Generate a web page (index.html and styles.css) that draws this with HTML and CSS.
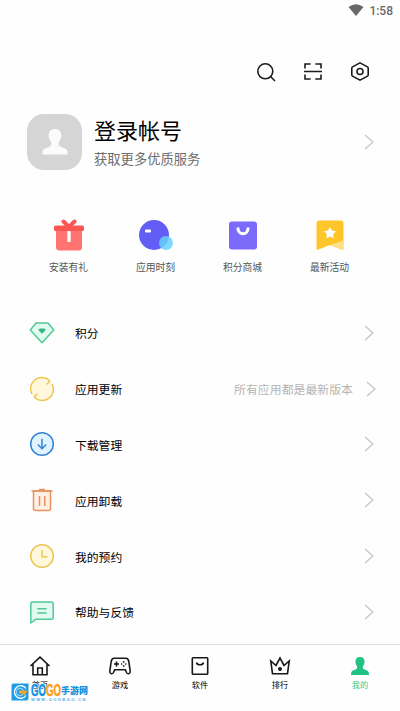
FILE: index.html
```html
<!DOCTYPE html>
<html lang="zh-CN">
<head>
  <meta charset="UTF-8" />
  <meta name="viewport" content="width=device-width, initial-scale=1.0" />
  <title>我的</title>
  <link rel="stylesheet" href="styles.css">
</head>
<body>

  <div class="status-bar">
    <svg width="16" height="12" viewBox="0 0 16 12"><path d="M0.5 3Q8-2.4 15.500 3L8 12Z" fill="#686868"/></svg>
    <span>1:58</span>
  </div>

  <div class="toolbar">
    <svg width="20" height="20" viewBox="0 0 20 20"><circle cx="9.300" cy="9.300" r="7.500"/><path d="M14.500 14.500L19 19"/></svg>
    <svg width="20" height="20" viewBox="0 0 20 20"><path d="M2 6.500V2H7.700M12.300 2H18V6.500M2 12.500V17H7.700M12.300 17H18V12.500M1 9.500H19"/></svg>
    <svg width="20" height="20" viewBox="0 0 20 20"><path d="M10 .9L17.500 4.900Q18.200 5.300 18.200 6.200V12.800Q18.200 13.700 17.500 14.100L10 18.100L2.500 14.100Q1.800 13.700 1.800 12.800V6.200Q1.800 5.300 2.500 4.900Z"/><circle cx="10" cy="9.500" r="3"/></svg>
  </div>

  <div class="profile">
    <div class="avatar">
      <svg width="26" height="26" viewBox="0 0 26 26"><path d="M13 0C17 0 19.300 2.700 19.300 6.500C19.300 10 17.300 12 16.800 13.500C16.300 15.500 17 17 19 18L23.500 19.800C25.300 20.600 25.600 22 25.600 25.500H.4C.4 22 .7 20.600 2.500 19.800L7 18C9 17 9.700 15.500 9.200 13.500C8.700 12 6.700 10 6.700 6.500C6.700 2.700 9 0 13 0Z" fill="#fbfbfb"/></svg>
    </div>
    <div class="profile-text">
      <h1>登录帐号</h1>
      <p>获取更多优质服务</p>
    </div>
    <svg class="chevron" width="10" height="16" viewBox="0 0 10 16"><path d="M1 1L9 8L1 15"/></svg>
  </div>

  <div class="shortcuts">
    <div class="shortcut">
      <svg width="36" height="34" viewBox="0 0 36 34">
        <path d="M5 8H31V28Q31 31.500 27.500 31.500H8.500Q5 31.500 5 28Z" fill="#ff7470"/>
        <path d="M12.500 2.500L18 8L23.500 2.500" stroke="#fb5752" stroke-width="4" stroke-linecap="round" fill="none"/>
        <rect x="3" y="6.500" width="30" height="5.500" rx="1.500" fill="#fb5752"/>
        <rect x="16.300" y="12" width="3.400" height="11" rx=".8" fill="#fff"/>
      </svg>
      <span>安装有礼</span>
    </div>
    <div class="shortcut">
      <svg width="36" height="34" viewBox="0 0 36 34">
        <circle cx="16" cy="16" r="15" fill="#625df5"/>
        <circle cx="28" cy="24" r="7" fill="#68d1ff" fill-opacity=".85"/>
        <rect x="7" y="10.500" width="6" height="3" rx="1" fill="#fff"/>
      </svg>
      <span>应用时刻</span>
    </div>
    <div class="shortcut">
      <svg width="36" height="34" viewBox="0 0 36 34">
        <rect x="4" y="2.500" width="28" height="28" rx="3" fill="#7c6afa"/>
        <path d="M13 8.500V9.500C13 16.400 23 16.400 23 9.500V8.500" stroke="#fff" stroke-width="3" fill="none"/>
      </svg>
      <span>积分商城</span>
    </div>
    <div class="shortcut">
      <svg width="36" height="34" viewBox="0 0 36 34">
        <path d="M4.500 4.500Q4.500 1.500 7.500 1.500H28.500Q31.500 1.500 31.500 4.500V29.500Q31.500 31.500 29.500 30.500L18 26L6.500 30.500Q4.500 31.500 4.500 29.500Z" fill="#ffc62b"/>
        <path d="M31.500 21.500V29.500Q31.500 31.500 29.500 30.500L18 26Z" fill="#ffe08a"/>
        <path d="M18 8L19.900 11.600L24 12.300L21.100 15.200L21.700 19.200L18 17.400L14.300 19.200L14.900 15.200L12 12.300L16.100 11.600Z" fill="#fff"/>
      </svg>
      <span>最新活动</span>
    </div>
  </div>

  <div class="menu">
    <div class="menu-item">
      <svg class="menu-icon green" width="28" height="28" viewBox="0 0 28 28">
        <path d="M8 4H20L25.700 11L14 23.800L2.300 11Z"/>
        <path d="M14 14.800L10.700 11.500V10.300L12 9.600H16L17.300 10.300V11.500Z" class="solid"/>
      </svg>
      <span class="menu-label">积分</span>
      <svg class="chevron" width="10" height="16" viewBox="0 0 10 16"><path d="M1 1L9 8L1 15"/></svg>
    </div>
    <div class="menu-item update">
      <svg class="menu-icon yellow" width="28" height="28" viewBox="0 0 28 28">
        <circle cx="14" cy="14" r="11.500" class="fill-only"/>
        <path d="M3.800 19A11.300 11.300 0 0 1 22 6M24.200 9A11.300 11.300 0 0 1 6 22M22 6L18.500 9.500M6 22L9.500 18.500" class="line"/>
      </svg>
      <span class="menu-label">应用更新</span>
      <span class="menu-note">所有应用都是最新版本</span>
      <svg class="chevron" width="10" height="16" viewBox="0 0 10 16"><path d="M1 1L9 8L1 15"/></svg>
    </div>
    <div class="menu-item">
      <svg class="menu-icon blue" width="28" height="28" viewBox="0 0 28 28">
        <circle cx="14" cy="14" r="11.300"/>
        <path d="M14 8.700V18.500M9.800 14.500L14 18.700L18.200 14.500" class="line"/>
      </svg>
      <span class="menu-label">下载管理</span>
      <svg class="chevron" width="10" height="16" viewBox="0 0 10 16"><path d="M1 1L9 8L1 15"/></svg>
    </div>
    <div class="menu-item">
      <svg class="menu-icon orange" width="28" height="28" viewBox="0 0 28 28">
        <path d="M5.500 5H22.500V22.500Q22.500 24.500 20.500 24.500H7.500Q5.500 24.500 5.500 22.500Z"/>
        <path d="M3.500 5H24.500M11 3.500H17M11.500 10V20M16.700 10V20" class="line"/>
      </svg>
      <span class="menu-label">应用卸载</span>
      <svg class="chevron" width="10" height="16" viewBox="0 0 10 16"><path d="M1 1L9 8L1 15"/></svg>
    </div>
    <div class="menu-item">
      <svg class="menu-icon yellow" width="28" height="28" viewBox="0 0 28 28">
        <circle cx="14" cy="14" r="11.300"/>
        <path d="M14 8V14.700H19.300" class="line"/>
      </svg>
      <span class="menu-label">我的预约</span>
      <svg class="chevron" width="10" height="16" viewBox="0 0 10 16"><path d="M1 1L9 8L1 15"/></svg>
    </div>
    <div class="menu-item">
      <svg class="menu-icon green" width="28" height="28" viewBox="0 0 28 28">
        <path d="M4.500 4H23.500Q25.200 4 25.200 5.700V19.500Q25.200 21.200 23.500 21.200H8L2.800 25V5.700Q2.800 4 4.500 4Z"/>
        <path d="M9.300 10.700H18.700M9.300 15H18.700" class="line"/>
      </svg>
      <span class="menu-label">帮助与反馈</span>
      <svg class="chevron" width="10" height="16" viewBox="0 0 10 16"><path d="M1 1L9 8L1 15"/></svg>
    </div>
  </div>

  <div class="tab-bar">
    <div class="tab">
      <svg width="24" height="22" viewBox="0 0 24 22"><path d="M2.500 11L12 2.200L21.500 11M5 9V19.700H19V9M9.700 19.700V13H14.300V19.700"/></svg>
      <span>首页</span>
    </div>
    <div class="tab">
      <svg width="24" height="22" viewBox="0 0 24 22"><path d="M6 3.200H18C20 3.200 20.500 4.500 20.900 7L22.200 16.300C22.500 19.200 19.500 19.500 18.500 17.500L17.300 14.800H6.700L5.500 17.500C4.500 19.500 1.500 19.200 1.800 16.300L3.100 7C3.500 4.500 4 3.200 6 3.200Z"/><path d="M8.500 6.500V11.500M6 9H11M15.700 7.700V6.300M15.700 11.700V10.300M14.200 9H13M18.400 9H17.200"/></svg>
      <span>游戏</span>
    </div>
    <div class="tab">
      <svg width="24" height="22" viewBox="0 0 24 22"><rect x="4.300" y="2.700" width="15.400" height="16.600" rx=".8"/><path d="M8.500 7.500C9 10.400 15 10.400 15.500 7.500"/></svg>
      <span>软件</span>
    </div>
    <div class="tab">
      <svg width="24" height="22" viewBox="0 0 24 22"><path d="M4.500 18.700L2.800 6L8 10.500L12 3L16 10.500L21.200 6L19.500 18.700Z"/><circle cx="12" cy="14" r="1.200" fill="#181818"/></svg>
      <span>排行</span>
    </div>
    <div class="tab active">
      <svg width="24" height="22" viewBox="0 0 24 22"><path d="M12 2C15 2 16.600 4 16.600 6.700C16.600 9.500 14.800 10.700 14.700 12.300C14.700 13.800 16 14.300 18 14.900C20.500 15.700 21 17 21 20H3C3 17 3.500 15.700 6 14.900C8 14.300 9.300 13.800 9.300 12.300C9.200 10.700 7.400 9.500 7.400 6.700C7.400 4 9 2 12 2Z"/></svg>
      <span>我的</span>
    </div>
  </div>

  <div class="watermark">
    <svg width="18" height="18" viewBox="0 0 18 18">
      <path d="M2.500 .5H17.500V15Q17.500 17.500 15 17.500H.5V2.500Q.5 .5 2.500 .5Z" fill="#1f9de4"/>
      <path d="M15 5.500A6.300 6.300 0 1 0 15 12.500" fill="none" stroke="#fff" stroke-width="1.300"/>
      <circle cx="9" cy="9" r="3.600" fill="none" stroke="#8bd3f6" stroke-width="1.200"/>
      <path d="M8 7.500H16.500L13.500 12.500L11.500 10.500H8Z" fill="#ffa126"/>
    </svg>
    <div class="watermark-text">
      <div class="watermark-name"><b>GO</b><b class="gold">GO</b><span>手游网</span></div>
      <div class="watermark-url">WWW.GOGBGO.CN</div>
    </div>
  </div>

</body>
</html>
```

FILE: styles.css
```css
* {
  box-sizing: border-box;
}
body {
  font-family: Roboto, "Noto Sans CJK SC", sans-serif;
  margin: 0;
  height: 711px;
  background: #fefefe;
  color: #111;
  display: flex;
  flex-direction: column;
  overflow: hidden;
}
svg {
  display: block;
  flex-shrink: 0;
}
h1, p {
  margin: 0;
}
.status-bar {
  height: 22px;
  padding-right: 7px;
  display: flex;
  justify-content: flex-end;
  align-items: center;
  gap: 5px;
  font-size: 12px;
  font-weight: 500;
  color: #686868;
}
.status-bar svg {
  margin-bottom: 2px;
}
.toolbar {
  height: 62px;
  padding: 40px 30px 0 0;
  display: flex;
  justify-content: flex-end;
  gap: 27px;
}
.toolbar svg {
  fill: none;
  stroke: #1c1c1c;
  stroke-width: 1.6;
}
.profile {
  height: 56px;
  margin-top: 30px;
  padding: 0 26px 0 27px;
  display: flex;
  align-items: center;
}
.avatar {
  width: 55px;
  height: 56px;
  border-radius: 17px;
  background: #d5d5d5;
  display: flex;
  justify-content: center;
  align-items: center;
}
.profile-text {
  flex: 1;
  margin-left: 12px;
  padding-top: 3px;
}
.profile-text h1 {
  font-size: 22px;
  font-weight: 400;
  line-height: 30px;
  color: #000;
}
.profile-text p {
  font-size: 13.3px;
  line-height: 20px;
  margin-top: 3px;
  color: #6d6d6d;
}
.chevron {
  fill: none;
  stroke: #c6c6c6;
  stroke-width: 1.3;
}
.shortcuts {
  display: flex;
  margin-top: 49px;
  padding: 0 27px 0 25px;
  height: 56px;
}
.shortcut {
  flex: 1;
  display: flex;
  flex-direction: column;
  align-items: center;
}
.shortcut span {
  margin-top: 8px;
  font-size: 9.8px;
  line-height: 14px;
  color: #555;
}
.menu {
  margin-top: 30px;
}
.menu-item {
  height: 55.8px;
  padding: 0 26px 0 28px;
  display: flex;
  align-items: center;
}
.menu-item.update {
  padding-right: 24px;
}
.menu-label {
  flex: 1;
  margin-left: 19px;
  font-size: 11.8px;
  color: #000;
}
.menu-note {
  margin-right: 13px;
  font-size: 11.9px;
  color: #b5b5b5;
}
.menu-icon {
  stroke-width: 1.5;
  stroke-linejoin: round;
}
.menu-icon .line {
  fill: none;
}
.menu-icon .fill-only {
  stroke: none;
}
.green {
  stroke: #50c996;
  fill: #e2fbf0;
}
.green .solid {
  fill: #35b882;
  stroke: none;
}
.yellow {
  stroke: #edc553;
  fill: #fff8dc;
}
.blue {
  stroke: #3584d5;
  fill: #e1f3ff;
}
.orange {
  stroke: #e8935f;
  fill: #fff0e6;
}
.tab-bar {
  margin-top: auto;
  height: 67px;
  border-top: 1px solid #dedede;
  padding-top: 10px;
  display: flex;
}
.tab {
  flex: 1;
  display: flex;
  flex-direction: column;
  align-items: center;
  font-size: 8.2px;
  line-height: 12px;
  color: #000;
}
.tab svg {
  fill: none;
  stroke: #181818;
  stroke-width: 1.6;
}
.tab span {
  margin-top: 2px;
}
.tab.active {
  color: #38c98c;
}
.tab.active svg {
  fill: #20c383;
  stroke: none;
}
/* site mark, lies over the first tab */
.watermark {
  position: absolute;
  left: 11px;
  top: 683px;
  display: flex;
  gap: 2px;
}
.watermark-name {
  display: flex;
  height: 14px;
  line-height: 16px;
  font-size: 9px;
  font-weight: 900;
  color: #1590df;
  white-space: nowrap;
  text-shadow: 1px 0 #fff, -1px 0 #fff, 0 1px #fff, 0 -1px #fff;
}
.watermark-name b {
  width: 15px;
  font-family: "Liberation Sans", sans-serif;
  font-size: 16px;
  font-weight: 700;
  transform: scaleX(0.6);
  transform-origin: left;
  -webkit-text-stroke: 0.5px currentColor;
}
.watermark-name .gold {
  color: #ff9d1c;
}
.watermark-url {
  font-family: "Liberation Sans", sans-serif;
  font-size: 4px;
  font-weight: 700;
  line-height: 5px;
  letter-spacing: 1.4px;
  color: #45aeea;
  white-space: nowrap;
}
```
